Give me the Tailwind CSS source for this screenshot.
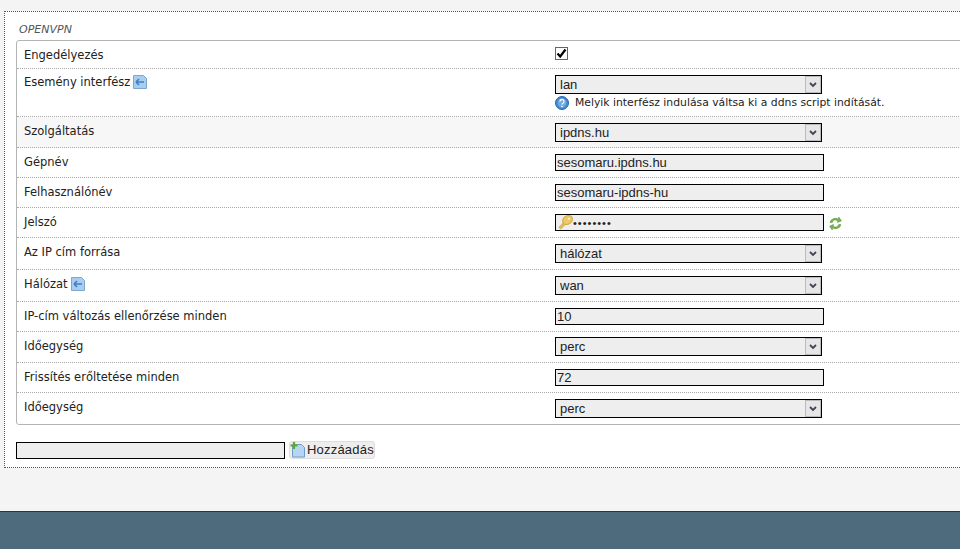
<!DOCTYPE html>
<html lang="en">
<head>
    <meta charset="UTF-8">
    <title>OpenVPN</title>
    <script src="https://cdn.jsdelivr.net/npm/@tailwindcss/browser@4"></script>
</head>
<body class="h-[549px] w-[960px] overflow-hidden bg-[#f4f4f4] font-['DejaVu_Sans',sans-serif] text-[11.5px] text-[#222]">

<div class="h-[511px] pt-[11px] pl-1">
    <!-- the box runs off the right edge of the window -->
    <div class="h-[457px] w-[980px] border border-dotted border-[#555] bg-white pl-[11px] pt-[11px]">
        <h3 class="h-[17px] pl-[3px] text-[11px] leading-[14px] italic text-[#555]">OPENVPN</h3>

        <div class="w-[970px] rounded-[3px] border border-[#b4b4b4]">
            <div class="flex h-[28px] border-b border-dotted border-[#aaa]">
                <div class="w-[538px] pl-[7px] pt-[7px] leading-[14px]">Engedélyezés</div>
                <div class="pt-[6px]">
                    <div class="flex h-[13px] w-[13px] items-center justify-center border border-[#666] bg-white">
                        <svg width="11" height="11" viewBox="0 0 11 11"><path d="M1.500 5.500 4.200 8.500 9.500 1.500" fill="none" stroke="#000" stroke-width="2.200"/></svg>
                    </div>
                </div>
            </div>

            <div class="flex h-[48px] border-b border-dotted border-[#aaa]">
                <div class="flex h-[17px] w-[538px] items-center gap-[3px] pl-[7px] pt-[9px] leading-[14px]">
                    Esemény interfész
                    <svg width="14" height="14" viewBox="0 0 14 14"><path d="M.5.5h10l3 3v10H.5z" fill="#a9cdf0" stroke="#7fa6cc"/><path d="M3 7h8M3 7l3-3M3 7l3 3" fill="none" stroke="#3f7fc0" stroke-width="1.600"/></svg>
                </div>
                <div class="pt-[6px]">
                    <div class="relative h-[19px] w-[267px]">
                        <select class="h-[19px] w-full appearance-none border border-black bg-[#eee] pl-1 font-['Liberation_Sans',sans-serif] text-[13px] leading-[17px] text-[#222]"><option>lan</option></select>
                        <div class="absolute top-px right-px flex h-[17px] w-[16px] items-center justify-center border border-[#bbb] bg-[#e6e6e6]">
                            <svg width="8" height="6" viewBox="0 0 8 6"><path d="M1 1l3 3 3-3" fill="none" stroke="#445" stroke-width="1.800"/></svg>
                        </div>
                    </div>
                    <div class="mt-[1px] flex h-[16px] items-center gap-[6px] text-[10.8px]">
                        <svg width="14" height="14" viewBox="0 0 14 14"><circle cx="7" cy="7" r="6.500" fill="#3f86cf" stroke="#2d68a8"/><circle cx="7" cy="7" r="4.500" fill="#6fa9e2"/><path d="M5 5.500a2 2 0 1 1 3 1.700c-.7.4-1 .7-1 1.400" fill="none" stroke="#fff" stroke-width="1.300"/><rect x="6.300" y="9.800" width="1.400" height="1.400" fill="#fff"/></svg>
                        <span>Melyik interfész indulása váltsa ki a ddns script indítását.</span>
                    </div>
                </div>
            </div>

            <div class="flex h-[31px] border-b border-dotted border-[#aaa] bg-[#f7f7f7]">
                <div class="w-[538px] pl-[7px] pt-[7px] leading-[14px]">Szolgáltatás</div>
                <div class="pt-[6px]">
                    <div class="relative h-[19px] w-[267px]">
                        <select class="h-[19px] w-full appearance-none border border-black bg-[#eee] pl-1 font-['Liberation_Sans',sans-serif] text-[13px] leading-[17px] text-[#222]"><option>ipdns.hu</option></select>
                        <div class="absolute top-px right-px flex h-[17px] w-[16px] items-center justify-center border border-[#bbb] bg-[#e6e6e6]">
                            <svg width="8" height="6" viewBox="0 0 8 6"><path d="M1 1l3 3 3-3" fill="none" stroke="#445" stroke-width="1.800"/></svg>
                        </div>
                    </div>
                </div>
            </div>

            <div class="flex h-[30px] border-b border-dotted border-[#aaa]">
                <div class="w-[538px] pl-[7px] pt-[7px] leading-[14px]">Gépnév</div>
                <div class="pt-[6px]">
                    <input type="text" value="sesomaru.ipdns.hu" class="h-[17px] w-[269px] border border-black bg-[#eee] pl-px font-['Liberation_Sans',sans-serif] text-[13px] leading-[15px] text-[#222]">
                </div>
            </div>

            <div class="flex h-[30px] border-b border-dotted border-[#aaa]">
                <div class="w-[538px] pl-[7px] pt-[7px] leading-[14px]">Felhasználónév</div>
                <div class="pt-[6px]">
                    <input type="text" value="sesomaru-ipdns-hu" class="h-[17px] w-[269px] border border-black bg-[#eee] pl-px font-['Liberation_Sans',sans-serif] text-[13px] leading-[15px] text-[#222]">
                </div>
            </div>

            <div class="flex h-[30px] border-b border-dotted border-[#aaa]">
                <div class="w-[538px] pl-[7px] pt-[7px] leading-[14px]">Jelszó</div>
                <div class="flex gap-[5px] pt-[6px]">
                    <div class="relative h-[17px] w-[269px]">
                        <input type="password" value="12345678" class="h-[17px] w-full border border-black bg-[#eee] pl-[17px] font-['Liberation_Sans',sans-serif] text-[11px] tracking-[1px] text-[#222]">
                        <svg class="absolute top-[1px] left-[2px]" width="16" height="16" viewBox="0 0 16 16"><path d="M2.500 13.500 8 8" stroke="#e0bb5c" stroke-width="3.600"/><ellipse cx="10.500" cy="5" rx="5.200" ry="4.200" transform="rotate(-35 10.500 5)" fill="#eec964" stroke="#cfa848"/><circle cx="12" cy="3.800" r="1.100" fill="#fff3c4"/></svg>
                    </div>
                    <svg class="mt-[2px]" width="13" height="15" viewBox="0 0 12 14"><path d="M1 6a5 4 0 0 1 8-3V1l2.500 3.500L8 6V4.500A3 3 0 0 0 3 6z" fill="#7cb84a" stroke="#4f8a2a" stroke-width=".5"/><path d="M11 8a5 4 0 0 1-8 3v2L.5 9.500 4 8v1.500A3 3 0 0 0 9 8z" fill="#7cb84a" stroke="#4f8a2a" stroke-width=".5"/></svg>
                </div>
            </div>

            <div class="flex h-[32px] border-b border-dotted border-[#aaa]">
                <div class="w-[538px] pl-[7px] pt-[7px] leading-[14px]">Az IP cím forrása</div>
                <div class="pt-[6px]">
                    <div class="relative h-[19px] w-[267px]">
                        <select class="h-[19px] w-full appearance-none border border-black bg-[#eee] pl-1 font-['Liberation_Sans',sans-serif] text-[13px] leading-[17px] text-[#222]"><option>hálózat</option></select>
                        <div class="absolute top-px right-px flex h-[17px] w-[16px] items-center justify-center border border-[#bbb] bg-[#e6e6e6]">
                            <svg width="8" height="6" viewBox="0 0 8 6"><path d="M1 1l3 3 3-3" fill="none" stroke="#445" stroke-width="1.800"/></svg>
                        </div>
                    </div>
                </div>
            </div>

            <div class="flex h-[32px] border-b border-dotted border-[#aaa]">
                <div class="flex h-[14px] w-[538px] items-center gap-[3px] pl-[7px] pt-[13px] leading-[14px]">
                    Hálózat
                    <svg width="14" height="14" viewBox="0 0 14 14"><path d="M.5.5h10l3 3v10H.5z" fill="#a9cdf0" stroke="#7fa6cc"/><path d="M3 7h8M3 7l3-3M3 7l3 3" fill="none" stroke="#3f7fc0" stroke-width="1.600"/></svg>
                </div>
                <div class="pt-[6px]">
                    <div class="relative h-[19px] w-[267px]">
                        <select class="h-[19px] w-full appearance-none border border-black bg-[#eee] pl-1 font-['Liberation_Sans',sans-serif] text-[13px] leading-[17px] text-[#222]"><option>wan</option></select>
                        <div class="absolute top-px right-px flex h-[17px] w-[16px] items-center justify-center border border-[#bbb] bg-[#e6e6e6]">
                            <svg width="8" height="6" viewBox="0 0 8 6"><path d="M1 1l3 3 3-3" fill="none" stroke="#445" stroke-width="1.800"/></svg>
                        </div>
                    </div>
                </div>
            </div>

            <div class="flex h-[30px] border-b border-dotted border-[#aaa]">
                <div class="w-[538px] pl-[7px] pt-[7px] leading-[14px]">IP-cím változás ellenőrzése minden</div>
                <div class="pt-[6px]">
                    <input type="text" value="10" class="h-[17px] w-[269px] border border-black bg-[#eee] pl-px font-['Liberation_Sans',sans-serif] text-[13px] leading-[15px] text-[#222]">
                </div>
            </div>

            <div class="flex h-[31px] border-b border-dotted border-[#aaa]">
                <div class="w-[538px] pl-[7px] pt-[7px] leading-[14px]">Időegység</div>
                <div class="pt-[5px]">
                    <div class="relative h-[19px] w-[267px]">
                        <select class="h-[19px] w-full appearance-none border border-black bg-[#eee] pl-1 font-['Liberation_Sans',sans-serif] text-[13px] leading-[17px] text-[#222]"><option>perc</option></select>
                        <div class="absolute top-px right-px flex h-[17px] w-[16px] items-center justify-center border border-[#bbb] bg-[#e6e6e6]">
                            <svg width="8" height="6" viewBox="0 0 8 6"><path d="M1 1l3 3 3-3" fill="none" stroke="#445" stroke-width="1.800"/></svg>
                        </div>
                    </div>
                </div>
            </div>

            <div class="flex h-[30px] border-b border-dotted border-[#aaa]">
                <div class="w-[538px] pl-[7px] pt-[7px] leading-[14px]">Frissítés erőltetése minden</div>
                <div class="pt-[6px]">
                    <input type="text" value="72" class="h-[17px] w-[269px] border border-black bg-[#eee] pl-px font-['Liberation_Sans',sans-serif] text-[13px] leading-[15px] text-[#222]">
                </div>
            </div>

            <div class="flex h-[31px]">
                <div class="w-[538px] pl-[7px] pt-[7px] leading-[14px]">Időegység</div>
                <div class="pt-[6px]">
                    <div class="relative h-[19px] w-[267px]">
                        <select class="h-[19px] w-full appearance-none border border-black bg-[#eee] pl-1 font-['Liberation_Sans',sans-serif] text-[13px] leading-[17px] text-[#222]"><option>perc</option></select>
                        <div class="absolute top-px right-px flex h-[17px] w-[16px] items-center justify-center border border-[#bbb] bg-[#e6e6e6]">
                            <svg width="8" height="6" viewBox="0 0 8 6"><path d="M1 1l3 3 3-3" fill="none" stroke="#445" stroke-width="1.800"/></svg>
                        </div>
                    </div>
                </div>
            </div>
        </div>

        <div class="mt-[16px] flex items-center gap-[4px]">
            <input type="text" class="h-[17px] w-[269px] border border-black bg-[#eee]">
            <button class="flex h-[18px] w-[86px] items-center rounded-[3px] border border-[#ddd] bg-[#eee] font-['Liberation_Sans',sans-serif] text-[13px] tracking-[0.2px] text-[#222]">
                <svg width="16" height="16" viewBox="0 0 16 16"><path d="M2.500 2.500h9l3 3v9.500h-12z" fill="#b5d5f2" stroke="#6f9cc4"/><path d="M4 0v7M.5 3.500h7" stroke="#5da832" stroke-width="2.200"/></svg>
                <span class="ml-px">Hozzáadás</span>
            </button>
        </div>
    </div>
</div>

<div class="h-[38px] border-t border-[#333] bg-[#4d6b7c]"></div>

</body>
</html>
